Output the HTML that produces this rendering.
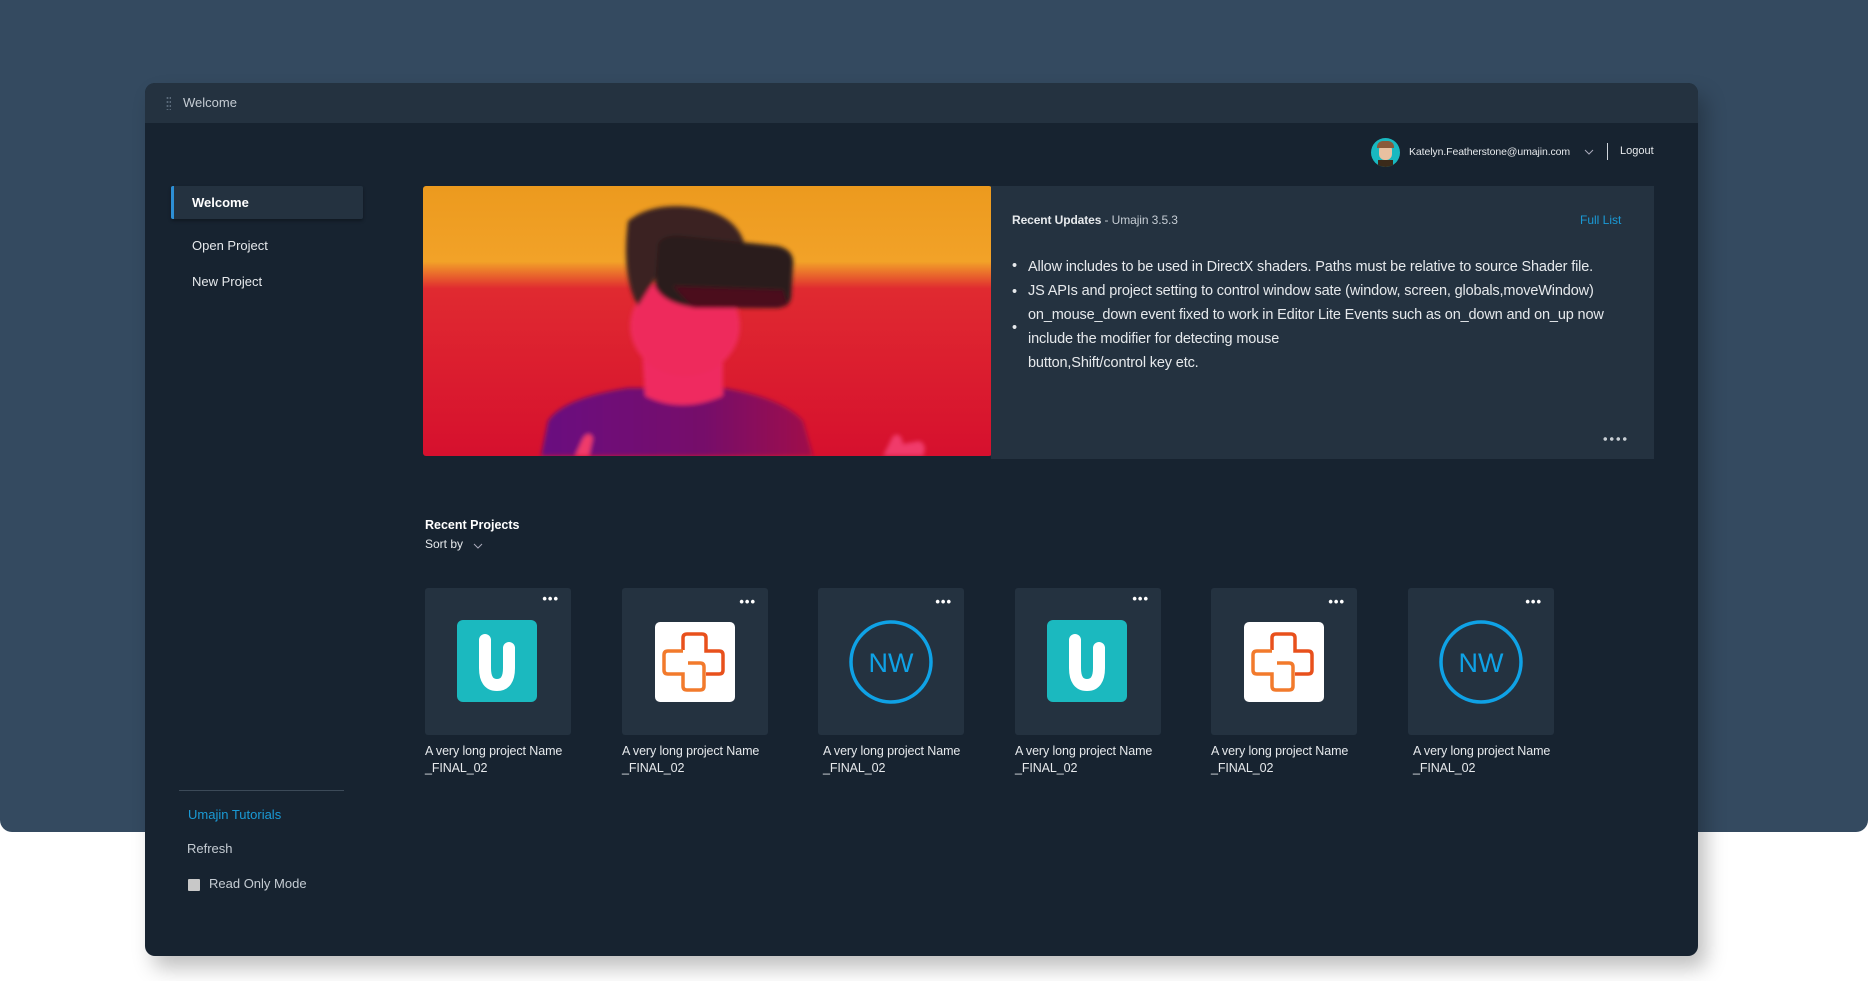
<!DOCTYPE html>
<html><head><meta charset="utf-8"><style>
*{margin:0;padding:0;box-sizing:border-box}
body{width:1868px;height:981px;background:#fff;position:relative;overflow:hidden;font-family:"Liberation Sans",sans-serif;color:#e6e9ec}
.bg{position:absolute;left:0;top:0;width:1868px;height:832px;background:#344a60;border-radius:0 0 12px 12px}
.win{position:absolute;left:145px;top:83px;width:1553px;height:873px;background:#172330;border-radius:10px;overflow:hidden;box-shadow:8px 12px 20px rgba(0,0,0,.25)}
.t{position:absolute;white-space:nowrap}
.title{position:absolute;left:0;top:0;width:100%;height:40px;background:#243240}
.card{position:absolute;top:505px;width:146px;height:147px;background:#243240;border-radius:3px}
.lbl{position:absolute;top:660px;font-size:12.5px;line-height:17px;color:#e6e9ec;letter-spacing:-0.1px}
.dots{position:absolute;top:7px;right:12px;font-size:13px;letter-spacing:1px;color:#fff;font-weight:bold;line-height:8px}
.li{font-size:14.5px;color:#e6e9ec;letter-spacing:-0.15px}
</style></head><body>
<div class="bg"></div>
<div class="win">
 <div class="title">
  <div style="position:absolute;left:21px;top:13px;width:5px;height:14px;background:radial-gradient(circle,#5a6a7a 0.8px,transparent 1.2px) 0 0/3px 4px"></div>
  <div class="t" style="left:38px;top:12px;font-size:13px;color:#c5ccd3">Welcome</div>
 </div>
 <div style="position:absolute;left:1226px;top:55px;width:29px;height:29px;border-radius:50%;background:#19b8c0;overflow:hidden">
  <div style="position:absolute;left:8px;top:6px;width:13px;height:16px;border-radius:6px;background:#e8c0a0"></div>
  <div style="position:absolute;left:6px;top:3px;width:17px;height:7px;border-radius:6px 6px 0 0;background:#8a5a3a"></div>
  <div style="position:absolute;left:7px;top:22px;width:15px;height:8px;background:#3a2a1a"></div>
 </div>
 <div class="t" style="left:1264px;top:63px;font-size:10.5px;color:#e6e9ec;letter-spacing:-0.1px">Katelyn.Featherstone@umajin.com</div>
 <svg style="position:absolute;left:1439px;top:66px" width="10" height="7"><path d="M1 1l4 4 4-4" stroke="#aab" fill="none" stroke-width="1"/></svg>
 <div style="position:absolute;left:1462px;top:60px;width:1px;height:17px;background:#cfd5db"></div>
 <div class="t" style="left:1475px;top:62px;font-size:11px;color:#e6e9ec">Logout</div>
 <div style="position:absolute;left:26px;top:103px;width:192px;height:33px;background:#243240;border-left:3px solid #2d8fd5;border-radius:2px;box-shadow:0 2px 3px rgba(0,0,0,.3)"></div>
 <div class="t" style="left:47px;top:112px;font-size:13px;font-weight:bold;color:#fff">Welcome</div>
 <div class="t" style="left:47px;top:155px;font-size:13px">Open Project</div>
 <div class="t" style="left:47px;top:191px;font-size:13px">New Project</div>
 <div style="position:absolute;left:34px;top:707px;width:165px;height:1px;background:#3c4a58"></div>
 <div class="t" style="left:43px;top:724px;font-size:13px;color:#1a9ad6">Umajin Tutorials</div>
 <div class="t" style="left:42px;top:758px;font-size:13px;color:#c5ccd3">Refresh</div>
 <div style="position:absolute;left:43px;top:796px;width:12px;height:12px;background:#c8c8c8;border-radius:1px"></div>
 <div class="t" style="left:64px;top:793px;font-size:13px;color:#c5ccd3">Read Only Mode</div>
 <svg style="position:absolute;left:278px;top:103px;border-radius:3px" width="569" height="270" viewBox="0 0 569 270">
  <defs>
   <linearGradient id="bgg" x1="0" y1="0" x2="0" y2="1">
    <stop offset="0" stop-color="#ec9a1e"/><stop offset=".28" stop-color="#f2a228"/><stop offset=".38" stop-color="#e02a30"/><stop offset="1" stop-color="#d6102e"/>
   </linearGradient>
   <linearGradient id="sh" x1="0" y1="0" x2="1" y2="0"><stop offset="0" stop-color="#6a0a80"/><stop offset=".6" stop-color="#760a6a"/><stop offset="1" stop-color="#a0104a"/></linearGradient>
   <filter id="bl"><feGaussianBlur stdDeviation="2"/></filter>
  </defs>
  <rect width="569" height="270" fill="url(#bgg)"/>
  <g filter="url(#bl)">
  <path d="M118 270 L125 235 Q140 212 205 202 L300 202 Q360 212 380 235 L390 270Z" fill="url(#sh)"/>
  <path d="M218 150 L222 210 Q258 228 300 210 L300 150Z" fill="#ef2a60"/>
  <ellipse cx="262" cy="140" rx="55" ry="50" fill="#ee2c5c"/>
  <path d="M205 35 Q230 15 275 22 Q315 30 322 60 L300 70 L240 80 L215 120 Q198 90 205 35Z" fill="#3a2420"/>
  <path d="M235 58 Q240 48 260 50 L355 60 Q372 64 370 80 L368 112 Q366 122 352 122 L275 122 Q240 118 232 100Z" fill="#2a1a1e"/>
  <path d="M250 100 L360 104 L365 120 L270 122Z" fill="#5a0a20" opacity=".7"/>
  <path d="M152 270 L160 252 Q166 244 170 252 L166 270Z" fill="#f03a6a"/>
  <path d="M460 270 L470 250 Q478 245 480 258 L496 255 Q505 258 500 270Z" fill="#f03a6a"/>
  </g>
 </svg>
 <div style="position:absolute;left:846px;top:103px;width:663px;height:273px;background:#243240"></div>
 <div class="t" style="left:867px;top:130px;font-size:12px;color:#c5ccd3;letter-spacing:-0.1px"><b style="color:#e6e9ec">Recent Updates</b> - Umajin 3.5.3</div>
 <div class="t" style="left:1435px;top:130px;font-size:12px;color:#1a9ad6">Full List</div>
 <div class="t li" style="left:867px;top:175px">•</div>
 <div class="t li" style="left:867px;top:201px">•</div>
 <div class="t li" style="left:867px;top:237px">•</div>
 <div class="t li" style="left:883px;top:176px">Allow includes to be used in DirectX shaders. Paths must be relative to source Shader file.</div>
 <div class="t li" style="left:883px;top:200px">JS APIs and project setting to control window sate (window, screen, globals,moveWindow)</div>
 <div class="t li" style="left:883px;top:224px">on_mouse_down event fixed to work in Editor Lite Events such as on_down and on_up now</div>
 <div class="t li" style="left:883px;top:248px">include the modifier for detecting mouse</div>
 <div class="t li" style="left:883px;top:272px">button,Shift/control key etc.</div>
 <div style="position:absolute;left:1457px;top:354px;width:25px;height:4px;background:radial-gradient(circle,#c8ced4 1.6px,transparent 2px) 0 0/6.5px 4px"></div>
 <div class="t" style="left:280px;top:435px;font-size:12.5px;font-weight:bold;color:#fff">Recent Projects</div>
 <div class="t" style="left:280px;top:454px;font-size:12px;color:#e6e9ec">Sort by</div>
 <svg style="position:absolute;left:328px;top:460px" width="10" height="7"><path d="M1 1l4 4 4-4" stroke="#aab" fill="none" stroke-width="1"/></svg>

 <div class="card" style="left:280px"><div class="dots">•••</div>
  <div style="position:absolute;left:32px;top:32px;width:80px;height:82px;background:#1bb9bf;border-radius:6px"></div>
  <svg style="position:absolute;left:32px;top:32px" width="80" height="82"><path d="M28 20 V48 Q28 65 40 65 Q52 65 52 48 V28" stroke="#fff" stroke-width="12" fill="none" stroke-linecap="round"/></svg>
 </div>
 <div class="card" style="left:477px"><div class="dots" style="top:10px">•••</div>
  <div style="position:absolute;left:33px;top:34px;width:80px;height:80px;background:#fff;border-radius:5px"></div>
  <svg style="position:absolute;left:33px;top:34px" width="80" height="80"><path d="M28 28 V16 Q28 12 32 12 H47 Q51 12 51 16 V29 H64 Q68 29 68 33 V48 Q68 52 64 52 H51" stroke="#e8501c" stroke-width="3.5" fill="none"/><path d="M49 64 Q49 68 45 68 H32 Q28 68 28 64 V52 H13 Q9 52 9 48 V33 Q9 29 13 29 H28 M33 41 H45 Q49 41 49 45 V64" stroke="#f27a2c" stroke-width="3.5" fill="none"/></svg>
 </div>
 <div class="card" style="left:673px"><div class="dots" style="top:10px">•••</div>
  <svg style="position:absolute;left:30px;top:31px" width="86" height="86"><circle cx="43" cy="43" r="40" stroke="#0fa2e6" stroke-width="3.5" fill="none"/><text x="43" y="53" text-anchor="middle" font-family="Liberation Sans,sans-serif" font-size="27" fill="#0fa2e6">NW</text></svg>
 </div>
 <div class="card" style="left:870px"><div class="dots">•••</div>
  <div style="position:absolute;left:32px;top:32px;width:80px;height:82px;background:#1bb9bf;border-radius:6px"></div>
  <svg style="position:absolute;left:32px;top:32px" width="80" height="82"><path d="M28 20 V48 Q28 65 40 65 Q52 65 52 48 V28" stroke="#fff" stroke-width="12" fill="none" stroke-linecap="round"/></svg>
 </div>
 <div class="card" style="left:1066px"><div class="dots" style="top:10px">•••</div>
  <div style="position:absolute;left:33px;top:34px;width:80px;height:80px;background:#fff;border-radius:5px"></div>
  <svg style="position:absolute;left:33px;top:34px" width="80" height="80"><path d="M28 28 V16 Q28 12 32 12 H47 Q51 12 51 16 V29 H64 Q68 29 68 33 V48 Q68 52 64 52 H51" stroke="#e8501c" stroke-width="3.5" fill="none"/><path d="M49 64 Q49 68 45 68 H32 Q28 68 28 64 V52 H13 Q9 52 9 48 V33 Q9 29 13 29 H28 M33 41 H45 Q49 41 49 45 V64" stroke="#f27a2c" stroke-width="3.5" fill="none"/></svg>
 </div>
 <div class="card" style="left:1263px"><div class="dots" style="top:10px">•••</div>
  <svg style="position:absolute;left:30px;top:31px" width="86" height="86"><circle cx="43" cy="43" r="40" stroke="#0fa2e6" stroke-width="3.5" fill="none"/><text x="43" y="53" text-anchor="middle" font-family="Liberation Sans,sans-serif" font-size="27" fill="#0fa2e6">NW</text></svg>
 </div>
 <div class="lbl" style="left:280px">A very long project Name<br>_FINAL_02</div>
 <div class="lbl" style="left:477px">A very long project Name<br>_FINAL_02</div>
 <div class="lbl" style="left:678px">A very long project Name<br>_FINAL_02</div>
 <div class="lbl" style="left:870px">A very long project Name<br>_FINAL_02</div>
 <div class="lbl" style="left:1066px">A very long project Name<br>_FINAL_02</div>
 <div class="lbl" style="left:1268px">A very long project Name<br>_FINAL_02</div>
</div>
</body></html>
